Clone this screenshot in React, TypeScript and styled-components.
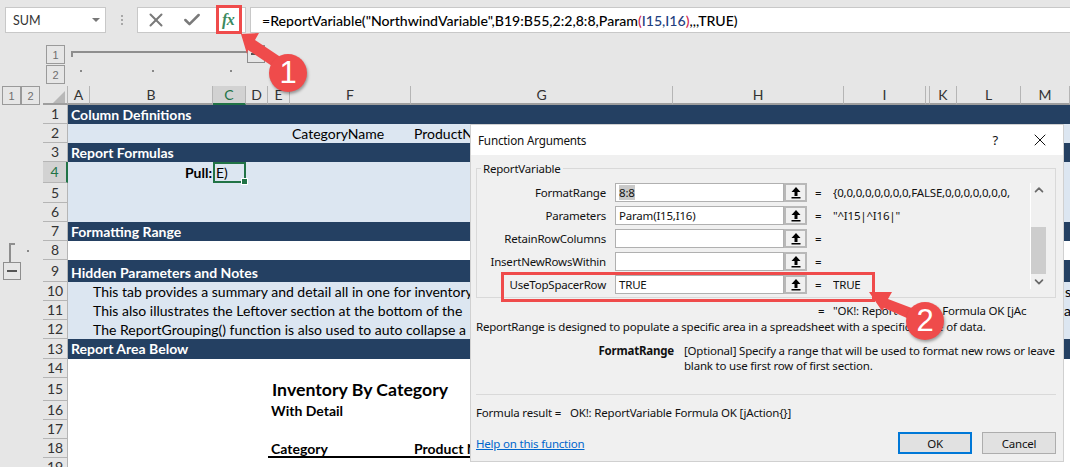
import React from "react";
import styled, { createGlobalStyle } from "styled-components";
import { X, Check, ChevronUp, ChevronDown } from "lucide-react";

const GlobalStyle = createGlobalStyle`
  html, body { margin: 0; padding: 0; background: #e6e6e6; }
  * { box-sizing: border-box; }
`;

const CELL_FONT = `Lato, "Liberation Sans", sans-serif`;
const DIALOG_FONT = `"Noto Sans", "Open Sans", sans-serif`;
const RED = "#ef4b4b";

const columns = [
  ["A", 22], ["B", 123], ["C", 33], ["D", 22], ["E", 22], ["F", 121], ["G", 262],
  ["H", 171], ["I", 82], ["", 4], ["K", 27], ["L", 64], ["M", 49],
] as const;
const gridTemplate = columns.map(([, w]) => `${w}px`).join(" ");

const Page = styled.div`
  position: relative;
  width: 1070px;
  height: 467px;
  overflow: hidden;
  background: #e6e6e6;
  font-family: ${CELL_FONT};
  color: #000;
`;

/* formula bar */
const FormulaBar = styled.div`
  display: flex;
  align-items: stretch;
  height: 33px;
  padding: 7px 0 0 5px;
`;
const NameBox = styled.div`
  width: 101px;
  display: flex;
  align-items: center;
  justify-content: space-between;
  padding: 0 5px 0 7px;
  background: #fff;
  border: 1px solid #c8c8c8;
  font-size: 12.5px;
  color: #333;
`;
const Caret = styled.span`
  width: 0;
  height: 0;
  border-left: 4px solid transparent;
  border-right: 4px solid transparent;
  border-top: 4px solid #777;
`;
const Grip = styled.div`
  width: 31px;
  display: flex;
  flex-direction: column;
  align-items: center;
  justify-content: center;
  gap: 2px;
  span { width: 2px; height: 2px; background: #a8a8a8; }
`;
const FormulaButtons = styled.div`
  width: 109px;
  display: flex;
  align-items: center;
  background: #fff;
  border: 1px solid #c8c8c8;
`;
const BarButton = styled.span<{ $w: number }>`
  width: ${(p) => p.$w}px;
  display: flex;
  justify-content: center;
  color: #7a7a7a;
`;
const Fx = styled.span`
  font-family: "Liberation Serif", serif;
  font-style: italic;
  font-weight: 700;
  font-size: 16px;
  letter-spacing: -0.5px;
  color: #3c8a5f;
`;
const FormulaInput = styled.div`
  flex: 1;
  margin-left: 4px;
  padding-left: 11px;
  display: flex;
  align-items: center;
  background: #fff;
  border: 1px solid #c8c8c8;
  border-right: none;
  font-size: 14.1px;
  font-weight: 500;
  white-space: pre;
`;
const Paren = styled.span`
  color: #d0244b;
`;
const Ref = styled.span`
  color: #1f3f80;
`;

/* outline strip */
const OutlineBar = styled.div`
  display: flex;
  height: 53px;
  padding: 12px 0 0 46px;
`;
const LevelColumn = styled.div`
  display: flex;
  flex-direction: column;
  gap: 1px;
`;
const LevelButton = styled.div`
  width: 19px;
  height: 19px;
  display: flex;
  align-items: center;
  justify-content: center;
  border: 1px solid #9a9a9a;
  font-family: "Liberation Sans", sans-serif;
  font-size: 11px;
  color: #6e6e6e;
`;
const OutlineTrack = styled.div`
  margin-left: 6px;
  width: 196px;
`;
const TrackTop = styled.div`
  display: flex;
  height: 19px;
`;
const TrackLine = styled.div`
  width: 176px;
  height: 12px;
  margin-top: 6px;
  border-top: 2px solid #8e8e8e;
  border-left: 2px solid #8e8e8e;
  clip-path: polygon(0 0, 100% 0, 100% 2px, 2px 2px, 2px 6px, 0 6px);
`;
const MinusBox = styled.div`
  flex: none;
  width: 18px;
  height: 18px;
  display: flex;
  align-items: center;
  justify-content: center;
  border: 1px solid #8e8e8e;
  &::before { content: ""; width: 10px; height: 2px; background: #555; }
`;
const DotRow = styled.div`
  display: flex;
  margin-top: 6px;
`;
const Dot = styled.span<{ $left: number }>`
  width: 2px;
  height: 2px;
  margin-left: ${(p) => p.$left}px;
  background: #888;
`;

/* sheet */
const HeaderRow = styled.div`
  display: flex;
  height: 19px;
`;
const GutterHead = styled.div`
  width: 43px;
  display: flex;
  padding-left: 2px;
`;
const CornerCell = styled.div`
  width: 25px;
  border-bottom: 2px solid #9e9e9e;
  border-right: 1px solid #b5b5b5;
  &::after {
    content: "";
    display: block;
    width: 12px;
    height: 12px;
    margin: 5px 0 0 10px;
    background: #b8b8b8;
    clip-path: polygon(100% 0, 100% 100%, 0 100%);
  }
`;
const ColumnHeads = styled.div`
  flex: 1;
  display: grid;
  grid-template-columns: ${gridTemplate};
`;
const ColumnHead = styled.div<{ $selected?: boolean }>`
  display: flex;
  align-items: center;
  justify-content: center;
  font-size: 14px;
  color: ${(p) => (p.$selected ? "#217346" : "#333")};
  background: ${(p) => (p.$selected ? "#d2d2d2" : "transparent")};
  border-right: 1px solid #b5b5b5;
  border-bottom: 2px solid ${(p) => (p.$selected ? "#217346" : "#9e9e9e")};
`;
const SheetRow = styled.div<{ $h: number }>`
  display: flex;
  height: ${(p) => p.$h}px;
`;
const Gutter = styled.div`
  width: 43px;
  flex: none;
  display: flex;
`;
const Bracket = styled.div`
  flex: none;
  width: 6px;
  height: 20px;
  margin: 2px 0 0 9px;
  border-top: 2px solid #8e8e8e;
  border-left: 2px solid #8e8e8e;
`;
const BracketDot = styled.span`
  width: 2px;
  height: 2px;
  margin: 9px 0 0 12px;
  background: #888;
`;
const RowMinus = styled(MinusBox)`
  margin: 2px 0 0 3px;
`;
const RowHead = styled.div<{ $selected?: boolean }>`
  width: 25px;
  flex: none;
  display: flex;
  align-items: center;
  justify-content: center;
  padding-bottom: 1px;
  font-size: 14px;
  color: ${(p) => (p.$selected ? "#217346" : "#333")};
  background: ${(p) => (p.$selected ? "#d2d2d2" : "transparent")};
  border-bottom: 1px solid #b5b5b5;
  border-right: ${(p) => (p.$selected ? "2px solid #217346" : "1px solid #b5b5b5")};
`;
const tones = {
  dark: { bg: "#244062", fg: "#fff", weight: 700 },
  light: { bg: "#dce6f1", fg: "#000", weight: 400 },
  white: { bg: "#fff", fg: "#000", weight: 400 },
};
const CellRow = styled.div<{ $tone: keyof typeof tones; $low?: boolean }>`
  flex: 1;
  display: grid;
  grid-template-columns: ${gridTemplate};
  align-items: center;
  padding: ${(p) => (p.$low ? "2px 0 0" : "0 0 1px")};
  background: ${(p) => tones[p.$tone].bg};
  color: ${(p) => tones[p.$tone].fg};
  font-weight: ${(p) => tones[p.$tone].weight};
  font-size: 14px;
  white-space: nowrap;
`;
const Cell = styled.div<{ $col: number; $pad?: number; $bold?: boolean; $size?: number; $right?: boolean }>`
  grid-column: ${(p) => p.$col};
  grid-row: 1;
  min-width: 0;
  padding-left: ${(p) => p.$pad ?? 2}px;
  font-weight: ${(p) => (p.$bold ? 700 : "inherit")};
  font-size: ${(p) => p.$size ?? 14}px;
  text-align: ${(p) => (p.$right ? "right" : "left")};
  ${(p) => p.$right && "padding-right: 1px;"}
`;
const Ruled = styled.div<{ $col: string }>`
  grid-column: ${(p) => p.$col};
  grid-row: 1;
  align-self: end;
  height: 2px;
  margin-bottom: -1px;
  background: #000;
`;
const SelectedCell = styled(Cell)`
  position: relative;
  align-self: stretch;
  display: flex;
  align-items: center;
  &::before {
    content: "";
    position: absolute;
    inset: 0 0 -1px 0;
    border: 2px solid #217346;
  }
  &::after {
    content: "";
    position: absolute;
    right: -2px;
    bottom: -3px;
    width: 5px;
    height: 5px;
    background: #217346;
    border: 1px solid #fff;
  }
`;

/* dialog */
const Dialog = styled.div`
  position: absolute;
  left: 470px;
  top: 124px;
  width: 594px;
  height: 338px;
  background: #f0f0f0;
  border: 1px solid #d0d0d0;
  font-family: ${DIALOG_FONT};
  font-size: 11.5px;
  letter-spacing: -0.2px;
  color: #111;
  white-space: nowrap;
`;
const TitleBar = styled.div`
  height: 30px;
  display: flex;
  align-items: center;
  padding: 0 13px 0 7px;
  background: #fff;
  font-size: 11.7px;
`;
const TitleText = styled.span`
  flex: 1;
`;
const Help = styled.span`
  margin-right: 32px;
  font-size: 13px;
`;
const DialogBody = styled.div`
  padding: 13px 7px 0 5px;
`;
const GroupBox = styled.div`
  height: 130px;
  display: flex;
  border: 1px solid #d9d9d9;
`;
const Legend = styled.span`
  position: absolute;
  left: 10px;
  top: 36px;
  padding: 0 2px;
  background: #f0f0f0;
`;
const ArgList = styled.div`
  width: 553px;
  padding-top: 14px;
  display: flex;
  flex-direction: column;
  gap: 4px;
`;
const ArgRow = styled.div<{ $marked?: boolean }>`
  position: relative;
  display: flex;
  align-items: center;
  height: 19px;
  ${(p) =>
    p.$marked &&
    `&::after {
      content: "";
      position: absolute;
      left: 24px;
      width: 368px;
      top: -3px;
      height: 24px;
      border: 3px solid ${RED};
    }`}
`;
const ArgLabel = styled.span`
  flex: none;
  width: 129px;
  text-align: right;
`;
const ArgInput = styled.div`
  flex: none;
  width: 169px;
  height: 19px;
  margin-left: 9px;
  padding-left: 3px;
  display: flex;
  align-items: center;
  background: #fff;
  border: 1px solid #b0b0b0;
`;
const Picked = styled.span`
  background: #c9c9c9;
`;
const ArgButton = styled.div`
  flex: none;
  width: 23px;
  height: 19px;
  display: flex;
  align-items: center;
  justify-content: center;
  background: #f0f0f0;
  border: 2px solid #b8b8b8;
`;
const ArgEquals = styled.span`
  flex: none;
  width: 26px;
  padding-left: 8px;
`;
const ArgValue = styled.span`
  flex: none;
  width: 199px;
  overflow: hidden;
`;
const ScrollBar = styled.div`
  width: 16px;
  margin: 14px 0 8px 0;
  display: flex;
  flex-direction: column;
  align-items: center;
  border-left: 1px solid #fff;
  color: #6a6a6a;
`;
const ScrollGap = styled.div<{ $h: number }>`
  height: ${(p) => p.$h}px;
  flex: none;
`;
const ScrollThumb = styled.div`
  width: 15px;
  height: 48px;
  background: #cdcdcd;
`;
const ResultLine = styled.div`
  margin-top: 5px;
  height: 16px;
  line-height: 16px;
  display: flex;
`;
const ResultValue = styled.span`
  flex: none;
  margin-left: 342px;
  width: 15px;
`;
const Description = styled.div`
  height: 16px;
  line-height: 16px;
`;
const ArgHelp = styled.div`
  display: flex;
  margin-top: 8px;
  line-height: 15px;
`;
const ArgHelpName = styled.span`
  flex: none;
  width: 198px;
  text-align: right;
  font-weight: 700;
`;
const ArgHelpText = styled.span`
  margin-left: 10px;
`;
const Separator = styled.div`
  height: 1px;
  margin-top: 21px;
  background: #d9d9d9;
`;
const FormulaResult = styled.div`
  margin-top: 10px;
  height: 16px;
  line-height: 16px;
  display: flex;
`;
const FormulaResultLabel = styled.span`
  flex: none;
  width: 94px;
`;
const Footer = styled.div`
  margin-top: 11px;
  display: flex;
  align-items: center;
  gap: 10px;
`;
const HelpLink = styled.a`
  flex: 1;
  color: #0066cc;
  text-decoration: underline;
`;
const DialogButton = styled.div<{ $primary?: boolean }>`
  width: 74px;
  height: 22px;
  display: flex;
  align-items: center;
  justify-content: center;
  background: #e1e1e1;
  border: ${(p) => (p.$primary ? "2px solid #0078d7" : "1px solid #adadad")};
`;

/* callouts */
const CalloutBox = styled.div`
  position: absolute;
  left: 216px;
  top: 5px;
  width: 26px;
  height: 29px;
  border: 3px solid ${RED};
`;
const CalloutArrows = styled.svg`
  position: absolute;
  left: 0;
  top: 0;
  width: 1070px;
  height: 467px;
  pointer-events: none;
`;
const Badge = styled.div<{ $x: number; $y: number }>`
  position: absolute;
  left: ${(p) => p.$x - 19}px;
  top: ${(p) => p.$y - 19}px;
  width: 38px;
  height: 38px;
  display: flex;
  align-items: center;
  justify-content: center;
  border-radius: 50%;
  background: ${RED};
  box-shadow: 1px 2px 3px rgba(0, 0, 0, 0.35);
  font-family: "Liberation Sans", sans-serif;
  font-size: 31px;
  color: #fff;
`;

const RefPicker = () => (
  <svg width="12" height="13" viewBox="0 0 12 13">
    <path d="M6 1 L10.5 6 L7.5 6 L7.5 10 L4.5 10 L4.5 6 L1.5 6 Z" fill="#000" />
    <rect x="1.5" y="11" width="9" height="1.5" fill="#000" />
  </svg>
);

type RowDef = {
  n: number;
  h: number;
  tone: keyof typeof tones;
  cells?: React.ReactNode;
  gutter?: React.ReactNode;
  selected?: boolean;
  low?: boolean;
};

const rows: RowDef[] = [
  { n: 1, h: 19, tone: "dark", cells: <Cell $col={1} $pad={3}>Column Definitions</Cell> },
  {
    n: 2, h: 19, tone: "light",
    cells: (
      <>
        <Cell $col={6}>CategoryName</Cell>
        <Cell $col={7} $pad={3}>ProductName</Cell>
      </>
    ),
  },
  { n: 3, h: 19, tone: "dark", cells: <Cell $col={1} $pad={3}>Report Formulas</Cell> },
  {
    n: 4, h: 21, tone: "light", selected: true,
    cells: (
      <>
        <Cell $col={2} $bold $right>Pull:</Cell>
        <SelectedCell $col={3} $pad={3}>E)</SelectedCell>
      </>
    ),
  },
  { n: 5, h: 20, tone: "light" },
  { n: 6, h: 19, tone: "light" },
  { n: 7, h: 19, tone: "dark", cells: <Cell $col={1} $pad={3}>Formatting Range</Cell> },
  { n: 8, h: 19, tone: "white", gutter: <><Bracket /><BracketDot /></> },
  { n: 9, h: 22, tone: "dark", low: true, gutter: <RowMinus />, cells: <Cell $col={1} $pad={3}>Hidden Parameters and Notes</Cell> },
  {
    n: 10, h: 19, tone: "light",
    cells: (
      <>
        <Cell $col={2} $pad={3}>This tab provides a summary and detail all in one for inventory</Cell>
        <Cell $col={13} $pad={44}>s</Cell>
      </>
    ),
  },
  {
    n: 11, h: 19, tone: "light",
    cells: (
      <>
        <Cell $col={2} $pad={3}>This also illustrates the Leftover section at the bottom of the</Cell>
        <Cell $col={13} $pad={43}>al</Cell>
      </>
    ),
  },
  { n: 12, h: 19, tone: "light", cells: <Cell $col={2} $pad={3}>The ReportGrouping() function is also used to auto collapse a</Cell> },
  { n: 13, h: 20, tone: "dark", cells: <Cell $col={1} $pad={3}>Report Area Below</Cell> },
  { n: 14, h: 19, tone: "white" },
  { n: 15, h: 23, tone: "white", cells: <Cell $col={5} $pad={4} $bold $size={17.7}>Inventory By Category</Cell> },
  { n: 16, h: 19, tone: "white", cells: <Cell $col={5} $pad={3} $bold>With Detail</Cell> },
  { n: 17, h: 19, tone: "white" },
  {
    n: 18, h: 19, tone: "white",
    cells: (
      <>
        <Cell $col={5} $pad={3} $bold>Category</Cell>
        <Cell $col={7} $pad={3} $bold>Product Name</Cell>
        <Ruled $col="5 / 9" />
      </>
    ),
  },
  { n: 19, h: 19, tone: "white" },
];

const args = [
  { label: "FormatRange", input: <Picked>8:8</Picked>, value: "{0,0,0,0,0,0,0,0,FALSE,0,0,0,0,0,0,0," },
  { label: "Parameters", input: "Param(I15,I16)", value: "\"^I15|^I16|\"" },
  { label: "RetainRowColumns", input: "", value: "" },
  { label: "InsertNewRowsWithin", input: "", value: "" },
  { label: "UseTopSpacerRow", input: "TRUE", value: "TRUE", marked: true },
];

export default function App() {
  return (
    <Page>
      <GlobalStyle />
      <FormulaBar>
        <NameBox>
          SUM
          <Caret />
        </NameBox>
        <Grip>
          <span />
          <span />
          <span />
        </Grip>
        <FormulaButtons>
          <BarButton $w={36}><X size={22} strokeWidth={2.2} /></BarButton>
          <BarButton $w={38}><Check size={20} strokeWidth={3} /></BarButton>
          <BarButton $w={34}><Fx>fx</Fx></BarButton>
        </FormulaButtons>
        <FormulaInput>
          =ReportVariable("NorthwindVariable",B19:B55,2:2,8:8,Param<Paren>(</Paren><Ref>I15,I16</Ref><Paren>)</Paren>,,,TRUE)
        </FormulaInput>
      </FormulaBar>

      <OutlineBar>
        <LevelColumn>
          <LevelButton>1</LevelButton>
          <LevelButton>2</LevelButton>
        </LevelColumn>
        <OutlineTrack>
          <TrackTop>
            <TrackLine />
            <MinusBox />
          </TrackTop>
          <DotRow>
            <Dot $left={9} />
            <Dot $left={70} />
            <Dot $left={76} />
          </DotRow>
        </OutlineTrack>
      </OutlineBar>

      <HeaderRow>
        <GutterHead>
          <LevelButton>1</LevelButton>
          <LevelButton>2</LevelButton>
        </GutterHead>
        <CornerCell />
        <ColumnHeads>
          {columns.map(([name], i) => (
            <ColumnHead key={i} $selected={name === "C"}>{name}</ColumnHead>
          ))}
        </ColumnHeads>
      </HeaderRow>

      {rows.map((r) => (
        <SheetRow key={r.n} $h={r.h}>
          <Gutter>{r.gutter}</Gutter>
          <RowHead $selected={r.selected}>{r.n}</RowHead>
          <CellRow $tone={r.tone} $low={r.low}>{r.cells}</CellRow>
        </SheetRow>
      ))}

      <Dialog>
        <TitleBar>
          <TitleText>Function Arguments</TitleText>
          <Help>?</Help>
          <X size={20} strokeWidth={1.2} />
        </TitleBar>
        <Legend>ReportVariable</Legend>
        <DialogBody>
          <GroupBox>
            <ArgList>
              {args.map((a) => (
                <ArgRow key={a.label} $marked={a.marked}>
                  <ArgLabel>{a.label}</ArgLabel>
                  <ArgInput>{a.input}</ArgInput>
                  <ArgButton><RefPicker /></ArgButton>
                  <ArgEquals>=</ArgEquals>
                  <ArgValue>{a.value}</ArgValue>
                </ArgRow>
              ))}
            </ArgList>
            <ScrollBar>
              <ChevronUp size={14} strokeWidth={3} />
              <ScrollGap $h={30} />
              <ScrollThumb />
              <ScrollGap $h={1} />
              <ChevronDown size={14} strokeWidth={3} />
            </ScrollBar>
          </GroupBox>
          <ResultLine>
            <ResultValue>=</ResultValue>
            "OK!: ReportVariable Formula OK [jAc
          </ResultLine>
          <Description>ReportRange is designed to populate a specific area in a spreadsheet with a specific range of data.</Description>
          <ArgHelp>
            <ArgHelpName>FormatRange</ArgHelpName>
            <ArgHelpText>
              [Optional] Specify a range that will be used to format new rows or leave
              <br />
              blank to use first row of first section.
            </ArgHelpText>
          </ArgHelp>
          <Separator />
          <FormulaResult>
            <FormulaResultLabel>Formula result =</FormulaResultLabel>
            OK!: ReportVariable Formula OK [jAction{"{}"}]
          </FormulaResult>
          <Footer>
            <HelpLink>Help on this function</HelpLink>
            <DialogButton $primary>OK</DialogButton>
            <DialogButton>Cancel</DialogButton>
          </Footer>
        </DialogBody>
      </Dialog>

      <CalloutBox />
      <CalloutArrows viewBox="0 0 1070 467">
        <path d="M241 34 L259 33 L255 40 L288 62 L281 72 L248 50 L247 54 Z" fill={RED} />
        <path d="M869 292 L892 292 L888 299 L938 318 L932 329 L884 308 L882 311 Z" fill={RED} />
      </CalloutArrows>
      <Badge $x={288} $y={73}>1</Badge>
      <Badge $x={925} $y={321}>2</Badge>
    </Page>
  );
}
